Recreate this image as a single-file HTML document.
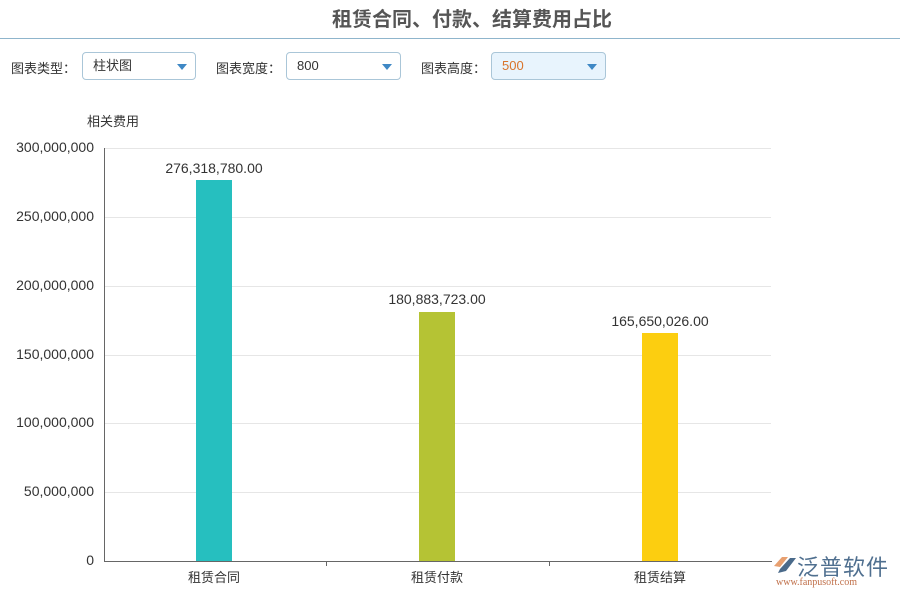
<!DOCTYPE html>
<html><head><meta charset="utf-8"><style>
*{margin:0;padding:0;box-sizing:border-box}
body{width:900px;height:600px;background:#fff;position:relative;overflow:hidden;font-family:"Liberation Sans","Noto Sans CJK SC",sans-serif;color:#333}
.t{position:absolute;left:0;width:944px;top:3px;text-align:center;font-size:20px;font-weight:bold;color:#555}
.line{position:absolute;left:0;top:38px;width:900px;height:1px;background:#8fb5cc}
.lab{position:absolute;top:58px;font-size:13px;color:#333}
.sel{position:absolute;top:52px;height:28px;border:1px solid #aac6d8;border-radius:4px;font-size:13px;padding:0 0 0 10px;line-height:26px;background:#fff}
.sel:after{content:"";position:absolute;right:8px;top:11px;border-left:5px solid transparent;border-right:5px solid transparent;border-top:6px solid #3f88c5}
.yl{position:absolute;right:806px;font-size:14px;color:#333;line-height:14px}
.g{position:absolute;left:104px;width:667px;height:1px;background:#e6e6e6}
.bar{position:absolute;width:36px}
.v{position:absolute;font-size:14px;color:#333;width:140px;text-align:center}
.xl{position:absolute;top:567px;font-size:13px;width:100px;text-align:center}
</style></head><body>
<div class="t">租赁合同、付款、结算费用占比</div>
<div class="line"></div>
<div class="lab" style="left:11px">图表类型：</div>
<div class="sel" style="left:82px;width:114px">柱状图</div>
<div class="lab" style="left:216px">图表宽度：</div>
<div class="sel" style="left:286px;width:115px">800</div>
<div class="lab" style="left:421px">图表高度：</div>
<div class="sel" style="left:491px;width:115px;background:#e8f4fd;color:#d9742b">500</div>
<div style="position:absolute;left:87px;top:111px;font-size:13px">相关费用</div>
<div class="g" style="top:148px"></div><div class="g" style="top:217px"></div><div class="g" style="top:286px"></div><div class="g" style="top:355px"></div><div class="g" style="top:423px"></div><div class="g" style="top:492px"></div>
<div class="yl" style="top:140px">300,000,000</div>
<div class="yl" style="top:209px">250,000,000</div>
<div class="yl" style="top:278px">200,000,000</div>
<div class="yl" style="top:347px">150,000,000</div>
<div class="yl" style="top:415px">100,000,000</div>
<div class="yl" style="top:484px">50,000,000</div>
<div class="yl" style="top:553px">0</div>
<div style="position:absolute;left:104px;top:148px;width:1px;height:414px;background:#666"></div>
<div style="position:absolute;left:104px;top:561px;width:668px;height:1px;background:#666"></div>
<div style="position:absolute;left:326px;top:561px;width:1px;height:5px;background:#666"></div>
<div style="position:absolute;left:549px;top:561px;width:1px;height:5px;background:#666"></div>
<div class="bar" style="left:196px;top:180px;height:381px;background:#26bfbf"></div>
<div class="bar" style="left:419px;top:312px;height:249px;background:#b5c334"></div>
<div class="bar" style="left:642px;top:333px;height:228px;background:#fcce10"></div>
<div class="v" style="left:144px;top:160px">276,318,780.00</div>
<div class="v" style="left:367px;top:291px">180,883,723.00</div>
<div class="v" style="left:590px;top:313px">165,650,026.00</div>
<div class="xl" style="left:164px">租赁合同</div>
<div class="xl" style="left:387px">租赁付款</div>
<div class="xl" style="left:610px">租赁结算</div>
<svg style="position:absolute;left:772px;top:554px" width="26" height="22"><path d="M2 12 L10 3 L16 3 L8 13 Z" fill="#e8a070"/><path d="M8 15 L18 4 L24 4 L14 17 L6 19 Z" fill="#4a6a8a"/></svg>
<div style="position:absolute;left:797px;top:550px;font-size:22px;color:#4f6f8f;letter-spacing:1px">泛普软件</div>
<div style="position:absolute;left:776px;top:577px;font-size:10px;color:#c0704a;font-family:'Liberation Serif',serif">www.fanpusoft.com</div>
</body></html>
